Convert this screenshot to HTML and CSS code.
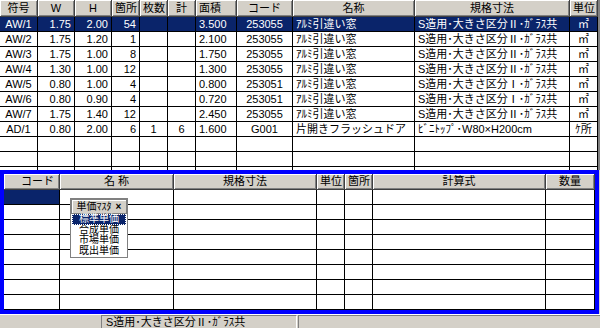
FILE: index.html
```html
<!DOCTYPE html>
<html lang="ja">
<head>
<meta charset="utf-8">
<title>単価入力</title>
<link rel="stylesheet" href="styles.css">
</head>
<body>
<div class="top">
  <div class="grid gtop">
    <div class="r hd"><div>符号</div><div>W</div><div>H</div><div>箇所</div><div>枚数</div><div>計</div><div>面積</div><div>コード</div><div>名称</div><div>規格寸法</div><div>単位</div></div>
    <div class="r sel"><div>AW/1</div><div>1.75</div><div>2.00</div><div>54</div><div></div><div></div><div>3.500</div><div>253055</div><div>ｱﾙﾐ引違い窓</div><div>S造用･大きさ区分Ⅱ･ｶﾞﾗｽ共</div><div>㎡</div></div>
    <div class="r"><div>AW/2</div><div>1.75</div><div>1.20</div><div>1</div><div></div><div></div><div>2.100</div><div>253055</div><div>ｱﾙﾐ引違い窓</div><div>S造用･大きさ区分Ⅱ･ｶﾞﾗｽ共</div><div>㎡</div></div>
    <div class="r"><div>AW/3</div><div>1.75</div><div>1.00</div><div>8</div><div></div><div></div><div>1.750</div><div>253055</div><div>ｱﾙﾐ引違い窓</div><div>S造用･大きさ区分Ⅱ･ｶﾞﾗｽ共</div><div>㎡</div></div>
    <div class="r"><div>AW/4</div><div>1.30</div><div>1.00</div><div>12</div><div></div><div></div><div>1.300</div><div>253055</div><div>ｱﾙﾐ引違い窓</div><div>S造用･大きさ区分Ⅱ･ｶﾞﾗｽ共</div><div>㎡</div></div>
    <div class="r"><div>AW/5</div><div>0.80</div><div>1.00</div><div>4</div><div></div><div></div><div>0.800</div><div>253051</div><div>ｱﾙﾐ引違い窓</div><div>S造用･大きさ区分Ⅰ･ｶﾞﾗｽ共</div><div>㎡</div></div>
    <div class="r"><div>AW/6</div><div>0.80</div><div>0.90</div><div>4</div><div></div><div></div><div>0.720</div><div>253051</div><div>ｱﾙﾐ引違い窓</div><div>S造用･大きさ区分Ⅰ･ｶﾞﾗｽ共</div><div>㎡</div></div>
    <div class="r"><div>AW/7</div><div>1.75</div><div>1.40</div><div>12</div><div></div><div></div><div>2.450</div><div>253055</div><div>ｱﾙﾐ引違い窓</div><div>S造用･大きさ区分Ⅱ･ｶﾞﾗｽ共</div><div>㎡</div></div>
    <div class="r"><div>AD/1</div><div>0.80</div><div>2.00</div><div>6</div><div>1</div><div>6</div><div>1.600</div><div>G001</div><div>片開きフラッシュドア</div><div>ﾋﾞﾆﾄｯﾌﾟ･W80×H200cm</div><div>ｹ所</div></div>
    <div class="r"><div></div><div></div><div></div><div></div><div></div><div></div><div></div><div></div><div></div><div></div><div></div></div>
    <div class="r"><div></div><div></div><div></div><div></div><div></div><div></div><div></div><div></div><div></div><div></div><div></div></div>
    <div class="r"><div></div><div></div><div></div><div></div><div></div><div></div><div></div><div></div><div></div><div></div><div></div></div>
  </div>
</div>
<div class="frame">
  <div class="grid gbot">
    <div class="r hd"><div class="hr">コード</div><div>名 称</div><div>規格寸法</div><div>単位</div><div>箇所</div><div>計算式</div><div>数量</div></div>
    <div class="r"><div class="cur"></div><div></div><div></div><div></div><div></div><div></div><div></div></div>
    <div class="r"><div></div><div></div><div></div><div></div><div></div><div></div><div></div></div>
    <div class="r"><div></div><div></div><div></div><div></div><div></div><div></div><div></div></div>
    <div class="r"><div></div><div></div><div></div><div></div><div></div><div></div><div></div></div>
    <div class="r"><div></div><div></div><div></div><div></div><div></div><div></div><div></div></div>
    <div class="r"><div></div><div></div><div></div><div></div><div></div><div></div><div></div></div>
    <div class="r"><div></div><div></div><div></div><div></div><div></div><div></div><div></div></div>
    <div class="r"><div></div><div></div><div></div><div></div><div></div><div></div><div></div></div>
  </div>
  <div class="popup">
    <div class="ptitle"><span>単価ﾏｽﾀ</span><span class="px">×</span></div>
    <ul class="plist">
      <li class="on">標準単価</li>
      <li>合成単価</li>
      <li>市場単価</li>
      <li>既出単価</li>
    </ul>
  </div>
</div>
<div class="status">
  <div class="sp sp1"></div>
  <div class="sp sp2">S造用･大きさ区分Ⅱ･ｶﾞﾗｽ共</div>
  <div class="sp sp3"></div>
</div>
</body>
</html>
```
FILE: styles.css
```css
* { box-sizing: border-box; margin: 0; padding: 0; }
html, body { width: 600px; height: 328px; overflow: hidden; }
body {
  background: #d4d0c8;
  font-family: "Liberation Sans", "Noto Sans CJK JP", sans-serif;
  font-size: 11px;
  color: #000;
}
.grid { display: grid; }
.r { display: contents; }
.r > div {
  border-right: 1px solid #000;
  border-bottom: 1px solid #000;
  line-height: 14px;
  padding: 0 3px;
  white-space: nowrap;
  overflow: hidden;
  background: #fff;
}
.hd > div {
  background: #d4d0c8;
  text-align: center;
  line-height: 16px;
  border-right: 1px solid #404040;
  border-bottom: 1px solid #404040;
  box-shadow: inset 1px 1px #fff, inset -1px -1px #808080;
}
.sel > div { background: #0a246a; color: #fff; }

/* top grid */
.top {
  height: 170px;
  overflow: hidden;
  background: #fff;
  border-right: 2px solid #808080;
}
.gtop {
  grid-template-columns: 38px 37px 37px 28px 28px 28px 41px 56px 122px 155px 28px;
  grid-template-rows: 17px;
  grid-auto-rows: 15px;
}
.gtop .r > div:nth-child(1),
.gtop .r > div:nth-child(5),
.gtop .r > div:nth-child(6),
.gtop .r > div:nth-child(8),
.gtop .r > div:nth-child(11) { text-align: center; }
.gtop .r > div:nth-child(2),
.gtop .r > div:nth-child(3),
.gtop .r > div:nth-child(4) { text-align: right; }
.gtop .hd > div:nth-child(n) { text-align: center; }
.gtop .hd > div:nth-child(7) { text-align: left; }

/* bottom frame */
.frame {
  position: relative;
  height: 144px;
  width: 599px;
  border: 4px solid #0000ff;
  background: #fff;
}
.gbot {
  grid-template-columns: 56px 114px 143px 28px 28px 173px 49px;
  grid-template-rows: 16px;
  grid-auto-rows: 15px;
}
.gbot .hd > div { line-height: 15px; }
.gbot .hd > .hr { text-align: right; padding-right: 5px; }
.gbot .cur { background: #0a246a; }

/* popup */
.popup {
  position: absolute;
  left: 66px;
  top: 24px;
  width: 58px;
  background: #fff;
  border: 1px solid #808080;
}
.ptitle {
  height: 15px;
  background: #d4d0c8;
  border: 1px solid #808080;
  box-shadow: inset 1px 1px #fff;
  display: flex;
  justify-content: center;
  gap: 4px;
  line-height: 13px;
  font-size: 10px;
}
.px { font-weight: bold; }
.plist { list-style: none; padding: 0 0 1px; }
.plist li {
  height: 10.5px;
  line-height: 10.5px;
  font-size: 10px;
  text-align: center;
  margin: 0 1px;
}
.plist li.on {
  background: #0a246a;
  color: #fff;
  outline: 1px dotted #fff;
  outline-offset: -1px;
}

/* status bar */
.status {
  display: flex;
  height: 14px;
  border-top: 1px solid #fff;
}
.sp { height: 13px; line-height: 13px; padding-left: 4px; font-size: 11px; white-space: nowrap; }
.sp1 { width: 101px; }
.sp2 { width: 196px; border-left: 1px solid #808080; border-top: 1px solid #808080; border-right: 1px solid #fff; }
.sp3 { flex: 1; border-left: 1px solid #808080; border-top: 1px solid #808080; margin-left: 1px; }
```
